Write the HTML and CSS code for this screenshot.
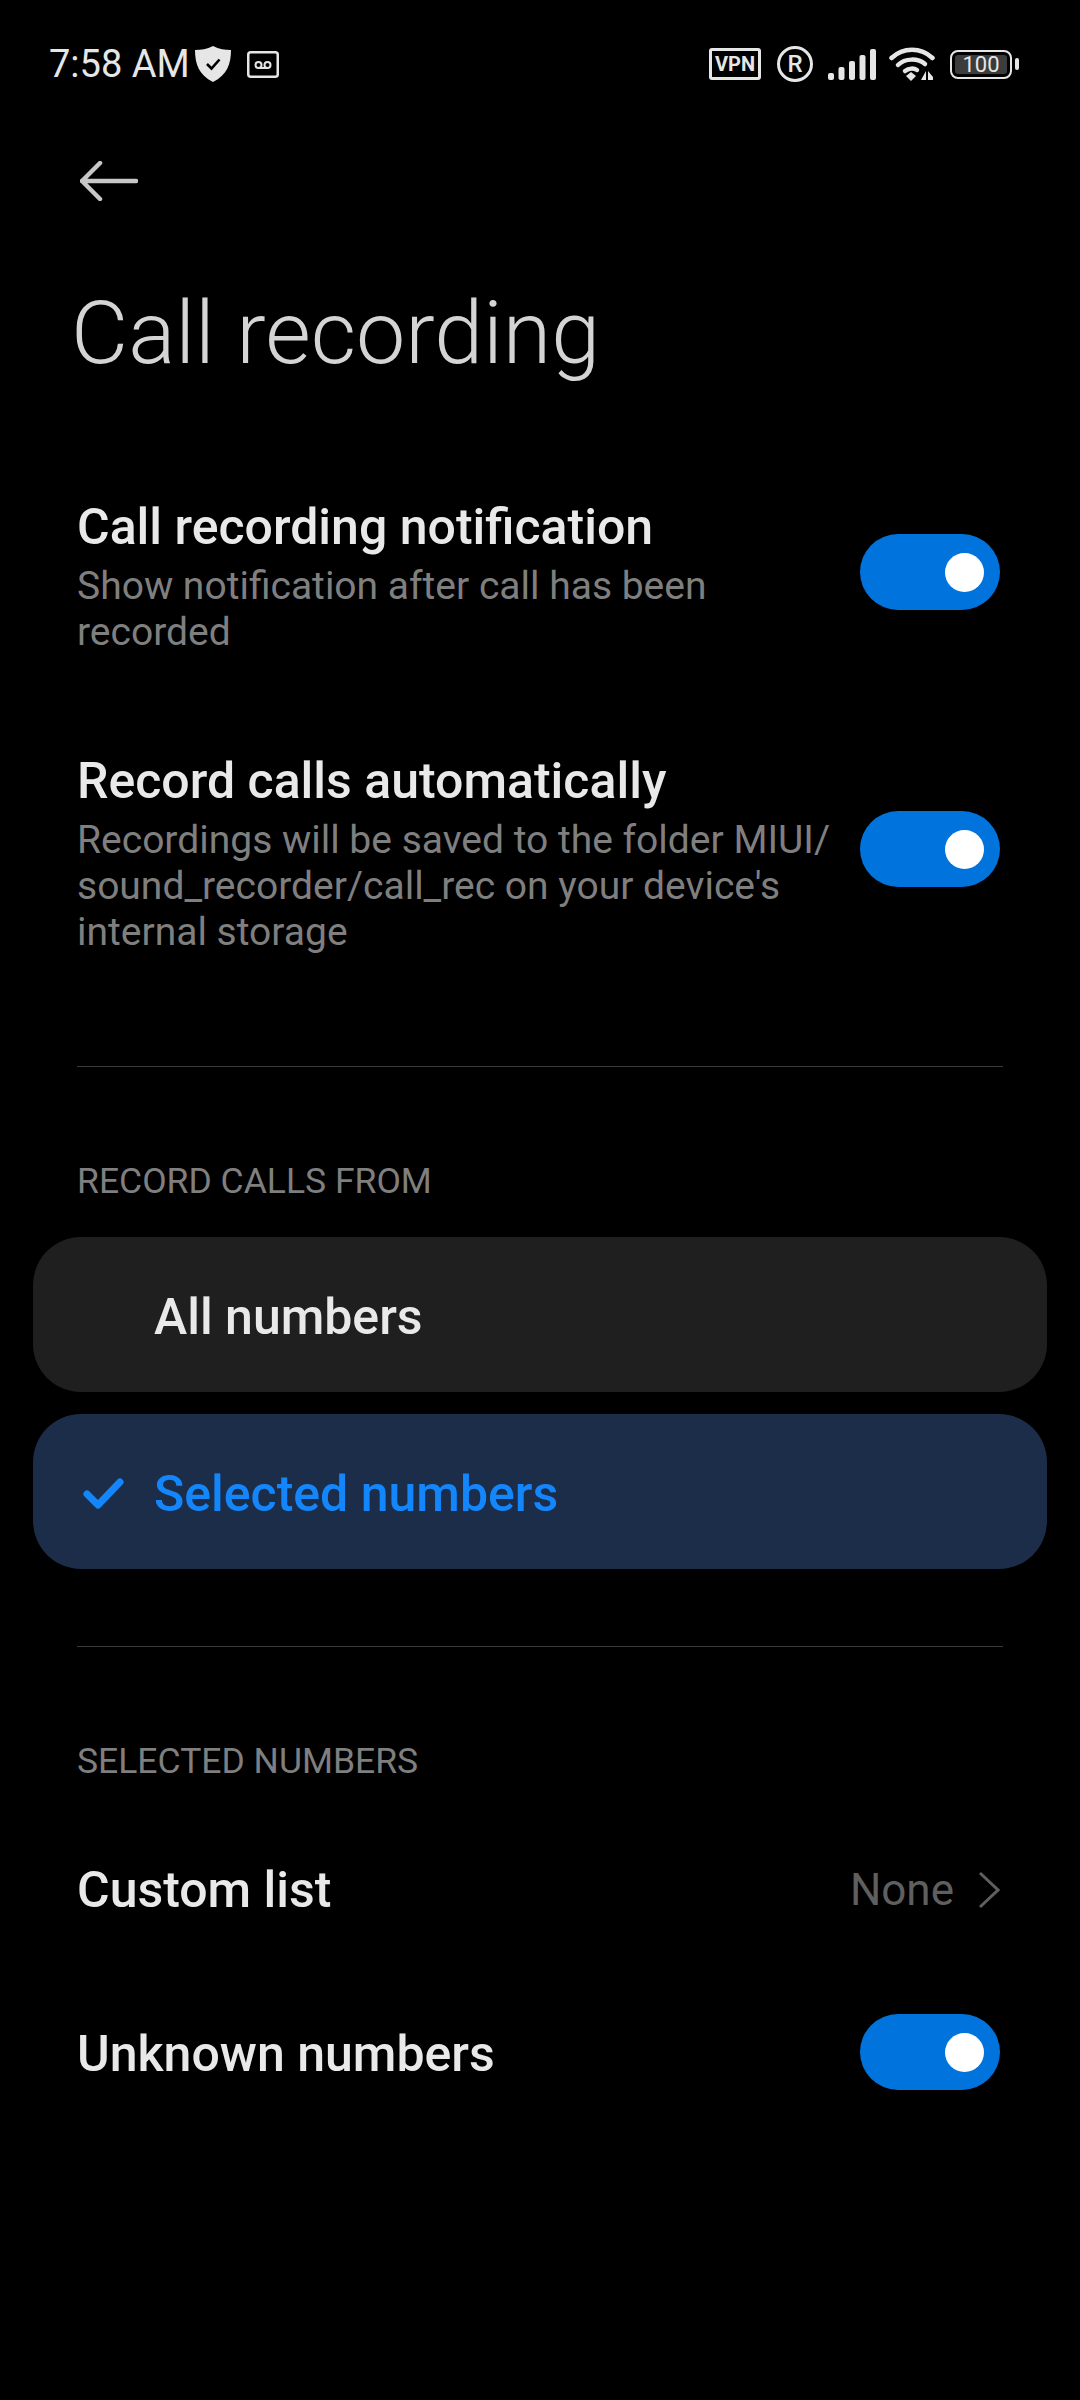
FILE: index.html
```html
<!DOCTYPE html>
<html lang="en">
<head>
    <meta charset="UTF-8">
    <meta name="viewport" content="width=device-width, initial-scale=1.0">
    <title>Call recording</title>
    <link rel="stylesheet" href="styles.css">
</head>
<body>
    <header class="status-bar">
        <div class="status-left">
            <span class="clock">7:58 AM</span>
            <svg class="icon-shield" width="36" height="36" viewBox="0 0 36 36">
                <path d="M18 0 C24 3 30 4 36 4 C36 18 32 29 18 36 C4 29 0 18 0 4 C6 4 12 3 18 0 Z" fill="#e6e6e6"/>
                <path d="M12 18 L16.500 22.500 L24.500 13.500" fill="none" stroke="#000" stroke-width="2.600"/>
            </svg>
            <svg class="icon-voicemail" width="32" height="27" viewBox="0 0 32 27">
                <rect x="1.250" y="1.250" width="29.500" height="24.500" rx="2.500" fill="none" stroke="#e6e6e6" stroke-width="2.500"/>
                <circle cx="11.500" cy="14" r="3" fill="none" stroke="#e6e6e6" stroke-width="2"/>
                <circle cx="20.500" cy="14" r="3" fill="none" stroke="#e6e6e6" stroke-width="2"/>
                <path d="M11.500 17 H20.500" stroke="#e6e6e6" stroke-width="2"/>
            </svg>
        </div>
        <div class="status-right">
            <span class="vpn-badge">VPN</span>
            <span class="reg-badge">R</span>
            <svg class="icon-signal" width="48" height="32" viewBox="0 0 48 32">
                <rect x="0" y="25" width="6" height="7" rx="2" fill="#e6e6e6"/>
                <rect x="10.500" y="19" width="6" height="13" rx="2" fill="#e6e6e6"/>
                <rect x="21" y="13" width="6" height="19" rx="2" fill="#e6e6e6"/>
                <rect x="31.500" y="7" width="6" height="25" rx="2" fill="#e6e6e6"/>
                <rect x="42" y="1" width="6" height="31" rx="2" fill="#e6e6e6"/>
            </svg>
            <svg class="icon-wifi" width="46" height="34" viewBox="0 0 46 34">
                <path d="M2.500 11 C14 0 32 0 43.500 11" fill="none" stroke="#e6e6e6" stroke-width="4.500" stroke-linecap="round"/>
                <path d="M9 18 C16 11 29 11 36 17" fill="none" stroke="#e6e6e6" stroke-width="4.500" stroke-linecap="round"/>
                <path d="M16 24 C20 21 25 21 28 23" fill="none" stroke="#e6e6e6" stroke-width="4.500" stroke-linecap="round"/>
                <path d="M17 29 L22 25 L27 29 L22 34 Z" fill="#e6e6e6"/>
                <path d="M37 24 V33 H32 Z M39 24 L44 30 V33 H39 Z" fill="#e6e6e6"/>
            </svg>
            <div class="battery">
                <div class="battery-body">
                    <span class="battery-level">100</span>
                </div>
                <div class="battery-tip"></div>
            </div>
        </div>
    </header>

    <div class="back-row">
        <svg width="58" height="40" viewBox="0 0 58 40">
            <path d="M20 2 L2 20 L20 38 M2 20 H56" fill="none" stroke="#c8c8c8" stroke-width="4.500" stroke-linecap="round" stroke-linejoin="round"/>
        </svg>
    </div>

    <h1 class="page-title">Call recording</h1>

    <section class="settings">
        <div class="setting-row">
            <div class="setting-text">
                <div class="setting-title">Call recording notification</div>
                <div class="setting-sub">Show notification after call has been recorded</div>
            </div>
            <div class="toggle"><div class="knob"></div></div>
        </div>
        <div class="setting-row">
            <div class="setting-text">
                <div class="setting-title">Record calls automatically</div>
                <div class="setting-sub">Recordings will be saved to the folder MIUI/<br>sound_recorder/call_rec on your device's<br>internal storage</div>
            </div>
            <div class="toggle"><div class="knob"></div></div>
        </div>
    </section>

    <div class="divider"></div>

    <div class="section-label">RECORD CALLS FROM</div>
    <div class="option-list">
        <div class="option">
            <span class="option-check"></span>
            <span>All numbers</span>
        </div>
        <div class="option selected">
            <span class="option-check">
                <svg width="42" height="34" viewBox="0 0 42 34">
                    <path d="M4 17 L15 28 L37 5" fill="none" stroke="#1486fb" stroke-width="7" stroke-linecap="round" stroke-linejoin="round"/>
                </svg>
            </span>
            <span>Selected numbers</span>
        </div>
    </div>

    <div class="divider divider-two"></div>

    <div class="section-label">SELECTED NUMBERS</div>
    <div class="plain-row custom-row">
        <span class="setting-title">Custom list</span>
        <span class="row-value">
            None
            <svg width="22" height="38" viewBox="0 0 22 38">
                <path d="M2 2 L20 19 L2 36" fill="none" stroke="#5f5f5f" stroke-width="3"/>
            </svg>
        </span>
    </div>
    <div class="plain-row unknown-row">
        <span class="setting-title">Unknown numbers</span>
        <div class="toggle"><div class="knob"></div></div>
    </div>
</body>
</html>
```

FILE: styles.css
```css
* {
    box-sizing: border-box;
}

body {
    margin: 0;
    width: 1080px;
    height: 2400px;
    overflow: hidden;
    background-color: #000;
    color: #e9e9e9;
    font-family: Roboto, "Noto Sans", sans-serif;
}

/* status bar */
.status-bar {
    height: 64px;
    margin-top: 32px;
    padding: 0 61px 0 49px;
    display: flex;
    justify-content: space-between;
    align-items: center;
}

.status-left,
.status-right {
    display: flex;
    align-items: center;
}

.clock {
    width: 146px;
    font-size: 38px;
    color: #e6e6e6;
}

.icon-voicemail {
    margin-left: 16px;
}

.vpn-badge {
    width: 52px;
    height: 32px;
    border: 3px solid #e6e6e6;
    border-radius: 3px;
    font-size: 20px;
    font-weight: 700;
    line-height: 26px;
    text-align: center;
    color: #e6e6e6;
}

.reg-badge {
    width: 36px;
    height: 36px;
    margin-left: 16px;
    border: 3px solid #e6e6e6;
    border-radius: 50%;
    font-size: 24px;
    font-weight: 500;
    line-height: 30px;
    text-align: center;
    color: #e6e6e6;
}

.icon-signal {
    margin-left: 15px;
}

.icon-wifi {
    margin-left: 13px;
}

.battery {
    margin-left: 15px;
    display: flex;
    align-items: center;
}

.battery-body {
    width: 62px;
    height: 29px;
    padding: 3px;
    border: 2px solid #e6e6e6;
    border-radius: 8px;
}

.battery-level {
    display: block;
    height: 100%;
    background-color: #3c3c3c;
    border-radius: 3px;
    font-size: 22px;
    line-height: 19px;
    text-align: center;
    color: #e6e6e6;
}

.battery-tip {
    width: 4px;
    height: 12px;
    margin-left: 3px;
    background-color: #e6e6e6;
    border-radius: 2px;
}

/* header */
.back-row {
    padding: 65px 0 0 80px;
    height: 187px;
}

.back-row svg {
    display: block;
}

.page-title {
    margin: 0;
    padding-left: 71px;
    height: 212px;
    font-size: 88px;
    font-weight: 300;
    line-height: 100px;
    color: #d4d4d4;
}

/* settings */
.settings {
    padding: 0 80px 17px 77px;
}

.setting-row {
    display: flex;
    align-items: center;
    justify-content: space-between;
    padding-bottom: 94px;
}

.setting-text {
    width: 770px;
}

.setting-text .setting-title {
    padding-top: 2px;
}

.setting-title {
    font-size: 50px;
    font-weight: 500;
    line-height: 60px;
    color: #e9e9e9;
}

.setting-sub {
    margin-top: 6px;
    font-size: 39px;
    line-height: 46px;
    color: #7f7f7f;
}

.toggle {
    width: 140px;
    height: 76px;
    margin-bottom: 6px;
    padding-right: 16px;
    display: flex;
    align-items: center;
    justify-content: flex-end;
    background-color: #0073dd;
    border-radius: 38px;
}

.knob {
    width: 39px;
    height: 39px;
    background-color: #fff;
    border-radius: 50%;
}

.divider {
    margin: 0 77px;
    height: 1px;
    background-color: #3a3a3a;
}

.section-label {
    margin-top: 92px;
    padding-left: 77px;
    height: 44px;
    font-size: 35.500px;
    line-height: 44px;
    color: #7f7f7f;
}

/* option cards */
.option-list {
    margin: 34px 33px 0;
    display: flex;
    flex-direction: column;
    gap: 22px;
}

.option {
    height: 155px;
    padding: 4px 0 0 50px;
    display: flex;
    align-items: center;
    background-color: #1f1f1f;
    border-radius: 48px;
    font-size: 50px;
    font-weight: 500;
    color: #e9e9e9;
}

.option.selected {
    background-color: #1b2d48;
    color: #1486fb;
}

.option-check {
    width: 71px;
    display: flex;
    align-items: center;
}

.divider-two {
    margin-top: 77px;
}

/* bottom rows */
.plain-row {
    padding: 0 80px 0 77px;
    display: flex;
    align-items: center;
    justify-content: space-between;
}

.custom-row {
    margin-top: 69px;
    height: 76px;
}

.unknown-row {
    margin-top: 86px;
}

.unknown-row .setting-title {
    padding-top: 3px;
}

.unknown-row .toggle {
    margin-bottom: 0;
}

.row-value {
    display: flex;
    align-items: center;
    gap: 24px;
    font-size: 44px;
    color: #5f5f5f;
}
```
